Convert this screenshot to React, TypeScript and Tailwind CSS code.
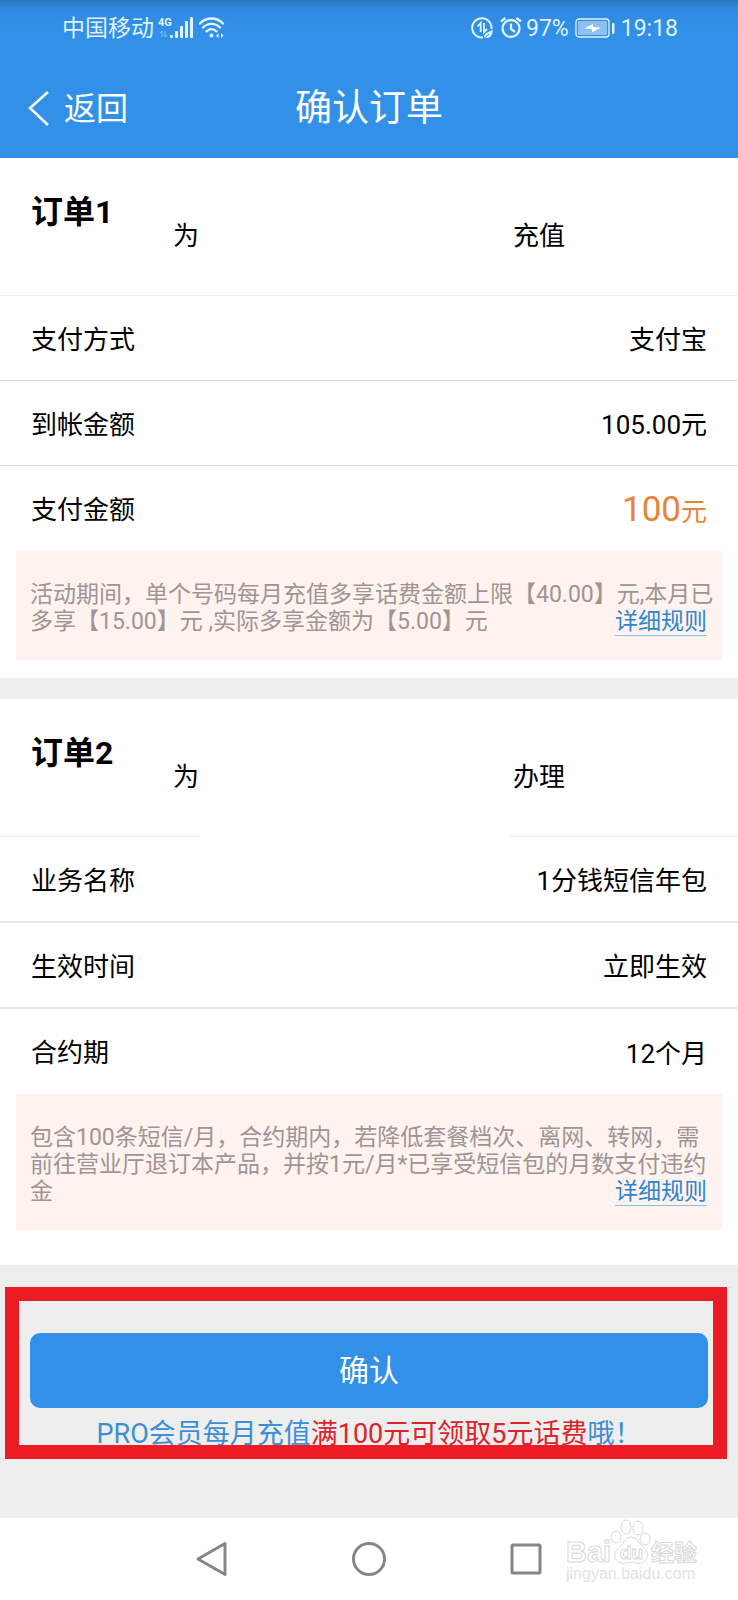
import type { ReactNode } from "react";

interface OrderRow {
  label: string;
  value: ReactNode;
}

interface Order {
  title: string;
  action: string;
  rows: OrderRow[];
  note: string[];
}

const orders: Order[] = [
  {
    title: "订单1",
    action: "充值",
    rows: [
      { label: "支付方式", value: "支付宝" },
      { label: "到帐金额", value: "105.00元" },
      {
        label: "支付金额",
        value: (
          <span className="text-[#e8843a]">
            <span className="text-[35px]">100</span>元
          </span>
        ),
      },
    ],
    note: [
      "活动期间，单个号码每月充值多享话费金额上限【40.00】元,本月已",
      "多享【15.00】元 ,实际多享金额为【5.00】元",
    ],
  },
  {
    title: "订单2",
    action: "办理",
    rows: [
      { label: "业务名称", value: "1分钱短信年包" },
      { label: "生效时间", value: "立即生效" },
      { label: "合约期", value: "12个月" },
    ],
    note: [
      "包含100条短信/月，合约期内，若降低套餐档次、离网、转网，需",
      "前往营业厅退订本产品，并按1元/月*已享受短信包的月数支付违约",
      "金",
    ],
  },
];

function SignalIcon() {
  return (
    <svg width="36" height="24" viewBox="0 0 36 24" fill="currentColor">
      <text x="0" y="10" fontSize="11" fontWeight="700" fontFamily="Roboto, sans-serif">4G</text>
      <g opacity="0.5" stroke="currentColor" strokeWidth="1" fill="none">
        <path d="M2 17l2-2v6M7 15v6l2-2" />
      </g>
      <rect x="12" y="19" width="3" height="3" rx="1" />
      <rect x="17" y="15" width="3" height="7" rx="1" />
      <rect x="22" y="10" width="3" height="12" rx="1" />
      <rect x="27" y="5" width="3" height="17" rx="1" />
      <rect x="32" y="1" width="3" height="21" rx="1" />
    </svg>
  );
}

function WifiIcon() {
  return (
    <svg width="27" height="24" viewBox="0 0 27 24" fill="none" stroke="currentColor" strokeWidth="2.4" strokeLinecap="round">
      <path d="M2 7.500C8.500 .8 18.500 .8 25 7.500" />
      <path d="M5 11.500C10 6.600 17 6.600 22 11.500" />
      <path d="M8.500 15.300C11.500 12.400 15.500 12.400 18.500 15.300" />
      <circle cx="13.500" cy="19.500" r="2" fill="currentColor" stroke="none" />
      <path d="M18 20l2.500-3v5zM25.500 19.500l-2.500 3v-5.500z" fill="currentColor" stroke="none" />
    </svg>
  );
}

function DataSaverIcon() {
  return (
    <svg width="23" height="24" viewBox="0 0 23 24" fill="none" stroke="currentColor" strokeWidth="2">
      <path d="M12 21.500A9.700 9.700 0 1 1 20.500 13" />
      <path d="M6.500 10.500L9.700 7v9M13 7v9l3-3" strokeWidth="1.800" />
      <path d="M21.500 13.500c.5 5-2 8.500-6 8.500-1 0-2-.4-2.500-1 0-4 4-4 8.500-7.500z" fill="currentColor" stroke="none" />
      <path d="M13 22.500l5-4.500" stroke="#318ee6" strokeWidth="1" />
    </svg>
  );
}

function AlarmIcon() {
  return (
    <svg width="22" height="24" viewBox="0 0 22 24" fill="none" stroke="currentColor" strokeWidth="2.300">
      <circle cx="11" cy="12.500" r="8.500" />
      <path d="M11 7.500v5.500l4 3" />
      <path d="M1 5.500L5.500 2M21 5.500L16.500 2" />
    </svg>
  );
}

function BatteryIcon() {
  return (
    <svg width="40" height="20" viewBox="0 0 40 20" fill="none">
      <rect x="1" y="1" width="33" height="18" rx="3" stroke="currentColor" strokeWidth="1.300" />
      <rect x="3" y="3" width="29" height="14" rx="1" fill="currentColor" opacity="0.500" />
      <path d="M9 10.500l9-4.500v3l8 .5-9 5v-3.500z" fill="white" />
      <rect x="37" y="5" width="2.500" height="11" rx="1" fill="currentColor" />
    </svg>
  );
}

function StatusBar() {
  return (
    <div className="flex h-14 items-center justify-between pl-[62px] pr-[60px] text-[23px] leading-none text-[#dff3ff]">
      <div className="flex items-center">
        <span>中国移动</span>
        <span className="ml-1"><SignalIcon /></span>
        <span className="ml-1"><WifiIcon /></span>
      </div>
      <div className="flex items-center">
        <DataSaverIcon />
        <span className="ml-1.5"><AlarmIcon /></span>
        <span className="ml-1">97%</span>
        <span className="ml-1.5"><BatteryIcon /></span>
        <span className="ml-1.5">19:18</span>
      </div>
    </div>
  );
}

function TitleBar() {
  return (
    <div className="grid h-[102px] grid-cols-3 items-center pt-1 text-white">
      <button type="button" className="flex items-center gap-[15px] pl-7 text-[32px]">
        <svg width="21" height="36" viewBox="0 0 21 36" fill="none" stroke="currentColor" strokeWidth="2.500">
          <path d="M20 1L2 17l18 17" />
        </svg>
        返回
      </button>
      <h1 className="text-center text-[37px]">确认订单</h1>
    </div>
  );
}

function OrderCard({ order, split }: { order: Order; split?: boolean }) {
  return (
    <section className="bg-white">
      <div className="flex h-[137px] pl-[31px] pt-8">
        <h2 className="w-[142px] text-[32px] font-bold leading-[44px]">{order.title}</h2>
        <p className="flex pt-6 leading-[44px]">
          <span className="w-[340px]">为</span>
          <span>{order.action}</span>
        </p>
      </div>
      {/* the second order's rule is broken under the hidden number */}
      <div className="flex h-px">
        <div className="w-[201px] bg-[#ececec]"></div>
        <div className={split ? "w-[309px]" : "w-[309px] bg-[#ececec]"}></div>
        <div className="flex-1 bg-[#ececec]"></div>
      </div>
      <dl>
        {order.rows.map((row, index) => (
          <div
            key={row.label}
            className={
              index === order.rows.length - 1
                ? "flex h-[85px] items-center justify-between px-[31px] pt-1"
                : split
                  ? "flex h-[86px] items-center justify-between border-b-2 border-[#e7e7e7] px-[31px] pt-1"
                  : "flex h-[85px] items-center justify-between border-b border-[#dcdcdc] px-[31px] pt-1"
            }
          >
            <dt>{row.label}</dt>
            <dd className="leading-[44px]">{row.value}</dd>
          </div>
        ))}
      </dl>
      <div className={split ? "pb-[35px]" : "pb-[18px]"}>
        <div className="mx-4 bg-[#fff2ef] pb-6 pl-[14px] pr-[15px] pt-[30px] text-[23px] leading-[27px] text-[#9c9694]">
          {order.note.slice(0, -1).map((line) => (
            <p key={line} className="whitespace-nowrap">{line}</p>
          ))}
          <div className="flex justify-between">
            <p>{order.note[order.note.length - 1]}</p>
            <a href="#rules" className="border-b border-[#8fbfe4] text-[#2f86cb]">详细规则</a>
          </div>
        </div>
      </div>
    </section>
  );
}

function Watermark() {
  return (
    <svg width="144" height="76" viewBox="0 0 144 76" fill="white" stroke="#d9d9d9" strokeWidth="1" fontFamily="'Liberation Sans', 'Noto Sans CJK SC', sans-serif">
      <text x="4" y="44" fontSize="29" fontWeight="700">Bai</text>
      <ellipse cx="54" cy="19" rx="5" ry="6" />
      <ellipse cx="64" cy="9" rx="5" ry="7" />
      <ellipse cx="76" cy="10" rx="5" ry="7" />
      <ellipse cx="83" cy="21" rx="5" ry="6" />
      <path d="M69 19c6 0 8 6 12 10 4 3 6 7 4 11-2 5-7 6-11 5-3-1-7-1-10 0-5 1-10-1-11-6-1-4 1-7 5-10 4-4 5-10 11-10z" />
      <text x="58" y="41" fontSize="19" fontWeight="700">du</text>
      <text x="89" y="43" fontSize="23" fontWeight="700">经验</text>
      <text x="4" y="61" fontSize="16" fill="#e3e3e3" stroke="none">jingyan.baidu.com</text>
    </svg>
  );
}

function NavBar() {
  return (
    <nav className="relative flex h-[82px] items-center justify-center gap-[121px] bg-white text-[#868686]">
      <button type="button" aria-label="back">
        <svg width="36" height="36" viewBox="0 0 36 36" fill="none" stroke="currentColor" strokeWidth="3" strokeLinejoin="round">
          <path d="M31 2.500v31L4 18z" />
        </svg>
      </button>
      <button type="button" aria-label="home">
        <svg width="36" height="36" viewBox="0 0 36 36" fill="none" stroke="currentColor" strokeWidth="3">
          <circle cx="18" cy="18" r="15.500" />
        </svg>
      </button>
      <button type="button" aria-label="recent">
        <svg width="36" height="36" viewBox="0 0 36 36" fill="none" stroke="currentColor" strokeWidth="3">
          <rect x="4" y="4" width="28" height="28" rx="1" />
        </svg>
      </button>
      <div className="absolute right-8 top-0">
        <Watermark />
      </div>
    </nav>
  );
}

export default function App() {
  return (
    <div className="bg-[#eeeeee] font-[Roboto,'Noto_Sans_CJK_SC',sans-serif] text-[26px] leading-normal text-black">
      <header className="bg-[#3290e9] bg-linear-to-b from-[#2b76bd] from-0% via-[#3189de] via-5% to-[#3290e9] to-20%">
        <StatusBar />
        <TitleBar />
      </header>

      <main>
        <OrderCard order={orders[0]} />
        <div className="h-[21px]"></div>
        <OrderCard order={orders[1]} split />

        <div className="relative h-[253px] px-[30px] pt-[68px]">
          <button type="button" className="h-[75px] w-full rounded-[10px] bg-[#3290e9] text-[30px] text-white">
            确认
          </button>
          <p className="mt-1 text-center text-[27px] leading-[44px] text-[#3c8fd6]">
            PRO会员每月充值<span className="text-[#d8262c]">满100元可领取5元话费</span>哦！
          </p>
          {/* red frame lies over the button and the hint */}
          <div className="pointer-events-none absolute bottom-[59px] left-[5px] right-[11px] top-[22px] border-[14px] border-[#ec1c24]"></div>
        </div>
      </main>

      <NavBar />
    </div>
  );
}
